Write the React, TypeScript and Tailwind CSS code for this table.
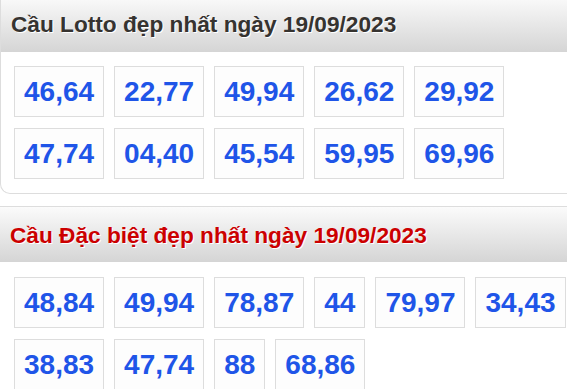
const lotto = ["46,64", "22,77", "49,94", "26,62", "29,92", "47,74", "04,40", "45,54", "59,95", "69,96"];
const dacBiet = ["48,84", "49,94", "78,87", "44", "79,97", "34,43", "38,83", "47,74", "88", "68,86"];

function NumBox({ value }: { value: string }) {
  return (
    <div className="h-[51px] px-[9px] flex items-center border border-[#ddd] bg-[#fdfdfd] text-[28px] font-bold text-[#1f55e8]">
      {value}
    </div>
  );
}

function Header({ title, red }: { title: string; red?: boolean }) {
  return (
    <h2
      className={
        "h-[56px] flex items-center pl-[10px] text-[22.67px] font-bold bg-gradient-to-b from-[#fbfbfb] to-[#d5d5d5] [text-shadow:1px_1px_0_#fff] " +
        (red ? "text-[#cc0000] border-t border-[#ddd]" : "text-[#363330]")
      }
    >
      {title}
    </h2>
  );
}

export default function App() {
  return (
    <div className="w-[567px] h-[389px] overflow-hidden bg-white font-['Liberation_Sans',Arial,sans-serif]">
      <section className="-mt-[4px] w-[620px] border-b border-l border-[#ddd] rounded-bl-[10px]">
        <Header title="Cầu Lotto đẹp nhất ngày 19/09/2023" />
        <div className="w-[575px] flex flex-wrap gap-x-[10px] gap-y-[11px] pl-[13px] pt-[14px] pb-[14px]">
          {lotto.map((n, i) => (
            <NumBox key={i} value={n} />
          ))}
        </div>
      </section>
      <section className="mt-[12px] w-[620px]">
        <Header title="Cầu Đặc biệt đẹp nhất ngày 19/09/2023" red />
        <div className="w-[575px] flex flex-wrap gap-x-[10px] gap-y-[11px] pl-[14px] pt-[15px]">
          {dacBiet.map((n, i) => (
            <NumBox key={i} value={n} />
          ))}
        </div>
      </section>
    </div>
  );
}
